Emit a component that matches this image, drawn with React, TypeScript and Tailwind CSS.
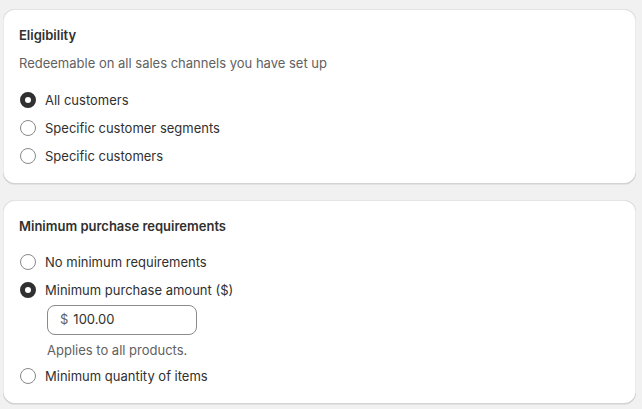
import React from "react";

const cardShadow =
  "shadow-[0_1px_0_0_rgba(26,26,26,0.07),inset_1px_0_0_0_rgba(0,0,0,0.08),inset_-1px_0_0_0_rgba(0,0,0,0.08),inset_0_-1px_0_0_rgba(0,0,0,0.17),inset_0_1px_0_0_rgba(204,204,204,0.5)]";

function Radio({ label, checked }: { label: string; checked?: boolean }) {
  return (
    <label className="flex h-6 items-center gap-[9px] pl-[1px]">
      <span
        className={
          checked
            ? "box-border h-4 w-4 rounded-full border-[5px] border-[#303030] bg-white"
            : "box-border h-4 w-4 rounded-full border border-[#8a8a8a] bg-white"
        }
      />
      <span className="text-[13px] leading-5 text-[#303030]">{label}</span>
    </label>
  );
}

export default function App() {
  return (
    <main
      className="min-h-[409px] bg-[#f1f1f1] pb-4 pl-[3px] pr-[6px] pt-[9px]"
      style={{ fontFamily: "Inter, 'Noto Sans', sans-serif" }}
    >
      <section className={`rounded-xl bg-white px-4 pb-4 pt-4 ${cardShadow}`}>
        <h2 className="text-[13px] font-semibold leading-5 text-[#303030]">Eligibility</h2>
        <p className="mt-2 text-[13px] leading-5 text-[#616161]">
          Redeemable on all sales channels you have set up
        </p>
        <div className="mt-[15px] flex flex-col gap-1">
          <Radio label="All customers" checked />
          <Radio label="Specific customer segments" />
          <Radio label="Specific customers" />
        </div>
      </section>

      <section className={`mt-4 rounded-xl bg-white px-4 pb-4 pt-4 ${cardShadow}`}>
        <h2 className="text-[13px] font-semibold leading-5 text-[#303030]">
          Minimum purchase requirements
        </h2>
        <div className="mt-[14px] flex flex-col gap-1">
          <Radio label="No minimum requirements" />
          <div>
            <Radio label="Minimum purchase amount ($)" checked />
            <div className="ml-7 mt-[3px]">
              <div className="flex h-[30px] w-[150px] items-center rounded-lg border border-[#8a8a8a] bg-white px-3 text-[13px]">
                <span className="text-[#616161]">$</span>
                <span className="ml-[5px] text-[#303030]">100.00</span>
              </div>
              <p className="mt-[5px] text-[13px] leading-5 text-[#616161]">Applies to all products.</p>
            </div>
          </div>
          <Radio label="Minimum quantity of items" />
        </div>
      </section>
    </main>
  );
}
